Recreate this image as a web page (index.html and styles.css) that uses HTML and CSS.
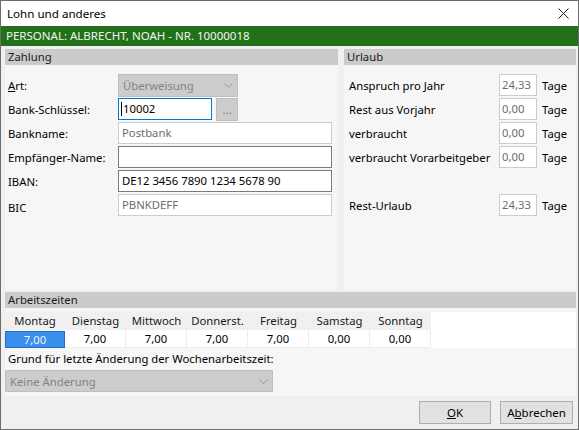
FILE: index.html
```html
<!DOCTYPE html>
<html lang="de">
<head>
<meta charset="utf-8">
<title>Lohn und anderes</title>
<link rel="stylesheet" href="styles.css">
</head>
<body>
<div class="window">
  <div class="titlebar">
    <span class="title">Lohn und anderes</span>
    <svg class="close" width="11" height="11" viewBox="0 0 11 11"><path d="M0.5 0.5 L10.5 10.5 M10.5 0.5 L0.5 10.5" stroke="#1a1a1a" stroke-width="1" fill="none"/></svg>
  </div>
  <div class="banner">PERSONAL: ALBRECHT, NOAH - NR. 10000018</div>
  <div class="content">
    <div class="upper">
      <section class="panel pay">
        <div class="sec-head">Zahlung</div>
        <div class="rows">
          <div class="row">
            <span class="lbl"><u>A</u>rt:</span>
            <div class="select art">Überweisung<svg class="chev" width="9" height="5" viewBox="0 0 9 5"><path d="M0.5 0.5 L4.5 4.5 L8.5 0.5" stroke="#9a9a9a" fill="none"/></svg></div>
          </div>
          <div class="row">
            <span class="lbl">Bank-Schlüssel:</span>
            <div class="field focus key"><span class="caret"></span>10002</div>
            <div class="dots">...</div>
          </div>
          <div class="row">
            <span class="lbl">Bankname:</span>
            <div class="field ro wide">Postbank</div>
          </div>
          <div class="row">
            <span class="lbl">Empfänger-Name:</span>
            <div class="field edit wide"></div>
          </div>
          <div class="row">
            <span class="lbl">IBAN:</span>
            <div class="field edit wide">DE12 3456 7890 1234 5678 90</div>
          </div>
          <div class="row">
            <span class="lbl low">BIC</span>
            <div class="field ro wide">PBNKDEFF</div>
          </div>
        </div>
      </section>
      <section class="panel vac">
        <div class="sec-head">Urlaub</div>
        <div class="rows">
          <div class="row"><span class="vlbl">Anspruch pro Jahr</span><div class="field ro num">24,33</div><span class="unit">Tage</span></div>
          <div class="row"><span class="vlbl">Rest aus Vorjahr</span><div class="field ro num">0,00</div><span class="unit">Tage</span></div>
          <div class="row"><span class="vlbl">verbraucht</span><div class="field ro num">0,00</div><span class="unit">Tage</span></div>
          <div class="row"><span class="vlbl">verbraucht Vorarbeitgeber</span><div class="field ro num">0,00</div><span class="unit">Tage</span></div>
          <div class="row"></div>
          <div class="row"><span class="vlbl">Rest-Urlaub</span><div class="field ro num">24,33</div><span class="unit">Tage</span></div>
        </div>
      </section>
    </div>
    <section class="panel lower">
      <div class="sec-head">Arbeitszeiten</div>
      <div class="table">
        <div class="grid">
          <div class="th">Montag</div>
          <div class="th">Dienstag</div>
          <div class="th">Mittwoch</div>
          <div class="th">Donnerst.</div>
          <div class="th">Freitag</div>
          <div class="th">Samstag</div>
          <div class="th">Sonntag</div>
          <div class="td sel">7,00</div>
          <div class="td">7,00</div>
          <div class="td">7,00</div>
          <div class="td">7,00</div>
          <div class="td">7,00</div>
          <div class="td">0,00</div>
          <div class="td">0,00</div>
        </div>
      </div>
      <div class="reason">Grund für letzte Änderung der Wochenarbeitszeit:</div>
      <div class="select reason-sel">Keine Änderung<svg class="chev" width="9" height="5" viewBox="0 0 9 5"><path d="M0.5 0.5 L4.5 4.5 L8.5 0.5" stroke="#9a9a9a" fill="none"/></svg></div>
    </section>
  </div>
  <div class="footer">
    <button class="btn ok"><u>O</u>K</button>
    <button class="btn cancel">A<u>b</u>brechen</button>
  </div>
</div>
</body>
</html>
```
FILE: styles.css
```css
html, body {
  margin: 0;
  padding: 0;
  background: #f0f0f0;
}

body {
  font-family: "Noto Sans", "Open Sans", sans-serif;
  font-size: 11.3px;
  color: #000;
}

.window {
  width: 579px;
  height: 430px;
  box-sizing: border-box;
  border: 1px solid #6c6c6c;
  background: #f0f0f0;
  display: flex;
  flex-direction: column;
  overflow: hidden;
}

.titlebar {
  flex: none;
  height: 25px;
  background: #fff;
  display: flex;
  align-items: center;
  justify-content: space-between;
  padding: 0 9px 0 6px;
}

.title {
  color: #000;
  font-size: 11.6px;
}

.close {
  display: block;
}

.banner {
  flex: none;
  height: 20px;
  line-height: 20px;
  background: #22711a;
  color: #f1f6ee;
  padding-left: 5px;
  font-size: 11.5px;
}

.content {
  flex: none;
  padding: 3px 2px 0 4px;
}

.upper {
  display: flex;
  gap: 6px;
  height: 241px;
}

.panel {
  background: #f6f6f6;
}

.pay {
  width: 333px;
  flex: none;
}

.vac {
  flex: 1;
}

.sec-head {
  height: 16px;
  line-height: 16px;
  background: #cbcbcb;
  padding-left: 3px;
  color: #1a1a1a;
}

.rows {
  margin-top: 8px;
  display: flex;
  flex-direction: column;
}

.row {
  height: 24px;
  display: flex;
  align-items: center;
}

.pay .row {
  padding-left: 3px;
}

.vac .row {
  padding-left: 5px;
}

.lbl {
  width: 110px;
  flex: none;
  white-space: nowrap;
}

.lbl.low {
  margin-top: 4px;
}

.vlbl {
  width: 150px;
  flex: none;
  white-space: nowrap;
}

.field {
  box-sizing: border-box;
  height: 22px;
  line-height: 20px;
  border: 1px solid #7a7a7a;
  background: #fff;
  padding-left: 3px;
  white-space: nowrap;
  display: flex;
  align-items: center;
}

.field.ro {
  border-color: #cccccc;
  color: #6d6d6d;
}

.field.focus {
  border-color: #0078d7;
}

.key {
  width: 94px;
}

.caret {
  display: inline-block;
  width: 1px;
  height: 14px;
  background: #000;
  margin-right: 1px;
  margin-left: -1px;
}

.wide {
  width: 214px;
}

.num {
  width: 38px;
  padding-left: 2px;
}

.unit {
  margin-left: 5px;
}

.dots {
  box-sizing: border-box;
  width: 22px;
  height: 23px;
  margin-left: 4px;
  background: #cccccc;
  border: 1px solid #bfbfbf;
  color: #7a7a7a;
  text-align: center;
  line-height: 22px;
}

.select {
  box-sizing: border-box;
  height: 23px;
  background: #cccccc;
  border: 1px solid #bfbfbf;
  color: #838383;
  padding: 0 4px 0 4px;
  display: flex;
  align-items: center;
  justify-content: space-between;
}

.chev {
  display: block;
}

.art {
  width: 120px;
}

.lower {
  margin-top: 2px;
  height: 104px;
  display: flex;
  flex-direction: column;
}

.table {
  margin-top: 4px;
  height: 36px;
  background: #fff;
}

.grid {
  display: grid;
  grid-template-columns: 60px repeat(6, 61px);
  grid-template-rows: 18px 18px;
  width: 426px;
}

.th {
  background: #f0f0f0;
  text-align: center;
  line-height: 18px;
  color: #1a1a1a;
}

.td {
  text-align: center;
  line-height: 17px;
  border-right: 1px solid #ececec;
  border-bottom: 1px solid #ececec;
}

.td.sel {
  background: #3a8fea;
  color: #eef4ff;
  border: 1px solid #1f6fcc;
  line-height: 15px;
  margin-top: 1px;
}

.reason {
  height: 22px;
  line-height: 22px;
  padding-left: 3px;
}

.reason-sel {
  width: 268px;
  height: 22px;
  padding-right: 4px;
}

.footer {
  flex: none;
  height: 33px;
  box-sizing: border-box;
  display: flex;
  justify-content: flex-end;
  align-items: flex-start;
  gap: 9px;
  padding: 5px 5px 0 0;
  margin-top: auto;
}

.btn {
  box-sizing: border-box;
  height: 23px;
  background: #e1e1e1;
  border: 1px solid #adadad;
  font-family: inherit;
  font-size: 11.5px;
  color: #000;
  padding: 0;
}

.ok {
  width: 72px;
}

.cancel {
  width: 73px;
}
```
